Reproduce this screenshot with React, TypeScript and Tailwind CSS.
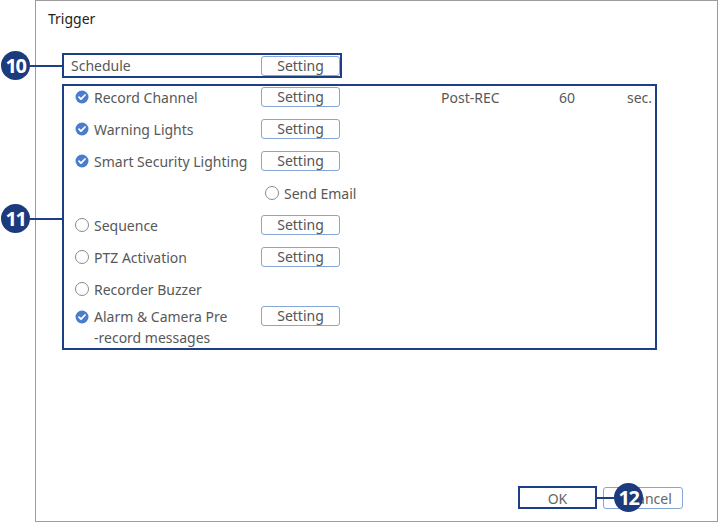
type Row = {
  label: string;
  checked: boolean;
  setting?: boolean;
};

const upperRows: Row[] = [
  { label: "Warning Lights", checked: true, setting: true },
  { label: "Smart Security Lighting", checked: true, setting: true },
];

const lowerRows: Row[] = [
  { label: "Sequence", checked: false, setting: true },
  { label: "PTZ Activation", checked: false, setting: true },
  { label: "Recorder Buzzer", checked: false },
];

function Check({ checked }: { checked: boolean }) {
  if (checked) {
    return (
      <svg width="14" height="14" viewBox="0 0 14 14" className="shrink-0">
        <circle cx="7" cy="7" r="6.5" fill="#4a7dcc" />
        <path d="M4 7.2l2 2 4-4.2" stroke="#fff" strokeWidth="1.8" fill="none" strokeLinecap="round" strokeLinejoin="round" />
      </svg>
    );
  }
  return <span className="w-[14px] h-[14px] rounded-full border border-[#8a8a8a] shrink-0" />;
}

function SettingBtn() {
  return (
    <button className="w-[79px] h-[20px] rounded-[3px] border border-[#86a6d6] text-[14px] leading-none text-[#555]">
      Setting
    </button>
  );
}

function Badge({ n }: { n: string }) {
  return (
    <span className="w-[29px] h-[29px] rounded-full bg-[#1c3b7c] text-white font-bold text-[20px] tracking-[-1.5px] flex items-center justify-center leading-none">
      {n}
    </span>
  );
}

function OptionRow({ row }: { row: Row }) {
  return (
    <div className="flex items-center h-[20px]">
      <div className="w-[197px] flex items-center gap-[5px] pl-[11px]">
        <Check checked={row.checked} />
        <span className="whitespace-nowrap">{row.label}</span>
      </div>
      {row.setting && <SettingBtn />}
    </div>
  );
}

export default function App() {
  return (
    <div className="relative w-[719px] h-[524px] bg-white overflow-hidden text-[14px] text-[#585858] font-['Noto_Sans',sans-serif]">
      <div className="ml-[35px] w-[683px] h-[522px] border border-[#9c9c9c] flex flex-col">
        <div className="pl-[12px] pt-[10px] text-[14px] text-[#222] leading-[16px]">Trigger</div>

        {/* schedule */}
        <div className="mt-[26px] ml-[26px] w-[280px] h-[25px] border-2 border-[#1c3f88] flex items-center">
          <span className="pl-[7px] w-[197px]">Schedule</span>
          <SettingBtn />
        </div>

        {/* actions */}
        <div className="mt-[6px] ml-[26px] w-[595px] h-[266px] border-2 border-[#1c3f88] pt-px flex flex-col gap-[12px]">
          <div className="flex items-center h-[20px]">
            <div className="w-[197px] flex items-center gap-[5px] pl-[11px]">
              <Check checked />
              <span>Record Channel</span>
            </div>
            <SettingBtn />
            <span className="ml-[101px] w-[118px]">Post-REC</span>
            <span className="w-[68px]">60</span>
            <span>sec.</span>
          </div>
          {upperRows.map((r) => (
            <OptionRow key={r.label} row={r} />
          ))}
          <div className="flex items-center h-[20px] pl-[201px] gap-[5px]">
            <Check checked={false} />
            <span>Send Email</span>
          </div>
          {lowerRows.map((r) => (
            <OptionRow key={r.label} row={r} />
          ))}
          <div className="flex items-start -mt-[5px]">
            <div className="w-[197px] flex items-start gap-[5px] pl-[11px]">
              <span className="mt-[4px]">
                <Check checked />
              </span>
              <span className="leading-[21px]">
                Alarm &amp; Camera Pre
                <br />
                -record messages
              </span>
            </div>
            <SettingBtn />
          </div>
        </div>

        <div className="mt-auto mb-[12px] ml-[482px] flex items-center gap-[6px]">
          <button className="w-[79px] h-[23px] border-2 border-[#1c3f88] text-[#666] text-[14px]">OK</button>
          <button className="w-[80px] h-[22px] rounded-[3px] border border-[#86a6d6] text-[#666] text-[14px] pl-[14px]">
            Cancel
          </button>
        </div>
      </div>

      {/* callouts */}
      <div className="absolute left-[1px] top-[51px] flex items-center">
        <Badge n="10" />
        <span className="w-[33px] h-[2px] bg-[#1c3f88]" />
      </div>
      <div className="absolute left-[1px] top-[204px] flex items-center">
        <Badge n="11" />
        <span className="w-[33px] h-[2px] bg-[#1c3f88]" />
      </div>
      <div className="absolute left-[596px] top-[483px] flex items-center">
        <span className="w-[18px] h-[2px] bg-[#1c3f88]" />
        <Badge n="12" />
      </div>
    </div>
  );
}
